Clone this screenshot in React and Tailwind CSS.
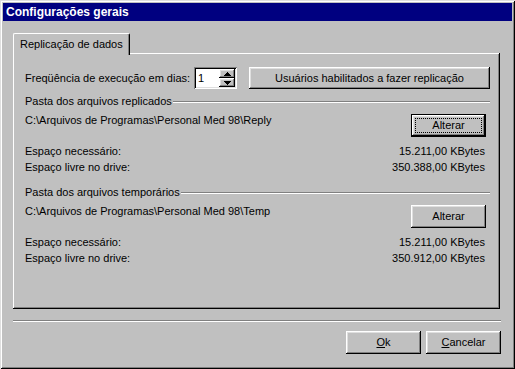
import React from 'react';

const font = { fontFamily: '"Liberation Sans", Arial, sans-serif' };

const raised =
  'shadow-[inset_-1px_-1px_#000000,inset_1px_1px_#ffffff,inset_-2px_-2px_#808080,inset_2px_2px_#dfdfdf]';
const sunken =
  'shadow-[inset_1px_1px_#808080,inset_-1px_-1px_#ffffff,inset_2px_2px_#000000,inset_-2px_-2px_#dfdfdf]';

const Button = ({ children, className = '', focused = false }) => (
  <div
    className={`relative flex items-center justify-center bg-[#c0c0c0] text-black ${
      focused
        ? 'border border-black shadow-[inset_-1px_-1px_#000000,inset_1px_1px_#ffffff,inset_-2px_-2px_#808080,inset_2px_2px_#dfdfdf]'
        : raised
    } ${className}`}
  >
    {focused && (
      <div className="absolute inset-[3px] border border-dotted border-black" />
    )}
    <span className="relative">{children}</span>
  </div>
);

const GroupHeader = ({ label }) => (
  <div className="flex h-[13px] items-center">
    <span className="leading-[13px]">{label}</span>
    <div className="ml-px flex-1 border-t border-b border-t-[#808080] border-b-white" />
  </div>
);

const FolderGroup = ({ label, path, needed, free, focused }) => (
  <div>
    <GroupHeader label={label} />
    <div className="mt-[6px] flex items-start justify-between">
      <span className="leading-[13px]">{path}</span>
      <Button focused={focused} className="mr-[4px] h-[23px] w-[75px]">
        Alterar
      </Button>
    </div>
    <div className="mt-[6px] mr-[5px]">
      <div className="flex h-[16px] items-center justify-between">
        <span>Espaço necessário:</span>
        <span>{needed}</span>
      </div>
      <div className="flex h-[16px] items-center justify-between">
        <span>Espaço livre no drive:</span>
        <span>{free}</span>
      </div>
    </div>
  </div>
);

const Spinner = () => (
  <div className={`flex h-[22px] w-[43px] bg-white p-[2px] ${sunken}`}>
    <div className="flex flex-1 items-center pl-[2px] leading-none">1</div>
    <div className="flex w-[16px] flex-col">
      <div className={`flex flex-1 items-center justify-center bg-[#c0c0c0] ${raised}`}>
        <svg width="7" height="4" viewBox="0 0 7 4">
          <path d="M3 0h1v1h1v1h1v1h1v1H0V3h1V2h1V1h1z" fill="#000" />
        </svg>
      </div>
      <div className={`flex flex-1 items-center justify-center bg-[#c0c0c0] ${raised}`}>
        <svg width="7" height="4" viewBox="0 0 7 4">
          <path d="M0 0h7v1H6v1H5v1H4v1H3V3H2V2H1V1H0z" fill="#000" />
        </svg>
      </div>
    </div>
  </div>
);

export default function App() {
  return (
    <div
      style={font}
      className="h-[369px] w-[515px] bg-[#c0c0c0] p-[3px] text-[11px] text-black shadow-[inset_1px_1px_#dfdfdf,inset_-1px_-1px_#000000,inset_2px_2px_#ffffff,inset_-2px_-2px_#808080]"
    >
      {/* title bar */}
      <div className="flex h-[18px] items-center bg-[#000080] px-[3px] text-[12px] font-bold text-white">
        Configurações gerais
      </div>

      <div className="px-[10px] pt-[12px]">
        {/* tab strip */}
        <div className="flex">
          <div className="relative z-10 -mb-[2px] flex h-[22px] w-[117px] items-center rounded-t-[2px] border-t border-l border-r border-t-white border-l-white border-r-black bg-[#c0c0c0] pl-[6px] shadow-[inset_-1px_0_#808080]">
            Replicação de dados
          </div>
        </div>

        {/* tab panel */}
        <div
          className={`h-[256px] w-[487px] bg-[#c0c0c0] pt-[14px] pl-[12px] pr-[10px] shadow-[inset_-1px_-1px_#000000,inset_1px_1px_#ffffff,inset_-2px_-2px_#808080]`}
        >
          <div className="flex h-[22px] items-center">
            <span className="w-[169px]">Freqüência de execução em dias:</span>
            <Spinner />
            <Button className="ml-[12px] h-[22px] flex-1">
              Usuários habilitados a fazer replicação
            </Button>
          </div>

          <div className="mt-[6px]">
            <FolderGroup
              label="Pasta dos arquivos replicados"
              path="C:\Arquivos de Programas\Personal Med 98\Reply"
              needed="15.211,00 KBytes"
              free="350.388,00 KBytes"
              focused
            />
          </div>

          <div className="mt-[11px]">
            <FolderGroup
              label="Pasta dos arquivos temporários"
              path="C:\Arquivos de Programas\Personal Med 98\Temp"
              needed="15.211,00 KBytes"
              free="350.912,00 KBytes"
            />
          </div>
        </div>

        {/* bottom separator */}
        <div className="mt-[11px] w-[488px] border-t border-b border-t-[#808080] border-b-white" />

        {/* dialog buttons */}
        <div className="mt-[9px] flex w-[488px] justify-end gap-[5px]">
          <Button className="h-[23px] w-[75px]">
            <span className="underline">O</span>k
          </Button>
          <Button className="h-[23px] w-[75px]">
            <span className="underline">C</span>ancelar
          </Button>
        </div>
      </div>
    </div>
  );
}
